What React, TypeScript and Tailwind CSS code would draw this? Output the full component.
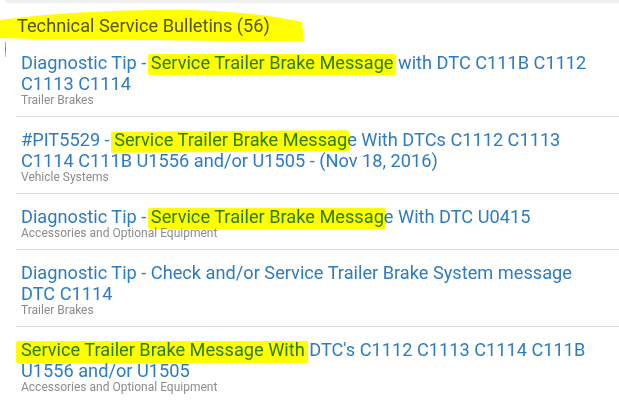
import React from "react";

type Row = { title: React.ReactNode; sub: string };

function HL({ children, className = "" }: { children: React.ReactNode; className?: string }) {
  return (
    <span className="relative">
      {children}
      <span
        className={
          "absolute left-[-3px] right-[-2px] top-[2px] bottom-[-2px] bg-[#ffff00] mix-blend-multiply rounded-[2px] pointer-events-none " +
          className
        }
      />
    </span>
  );
}

const rows: Row[] = [
  {
    title: (
      <>
        Diagnostic Tip - <HL>Service Trailer Brake Message</HL> with DTC C111B C1112 C1113 C1114
      </>
    ),
    sub: "Trailer Brakes",
  },
  {
    title: (
      <>
        #PIT5529 - <HL className="-rotate-[0.4deg] top-[1px]">Service Trailer Brake Messag</HL>e With DTCs C1112 C1113
        C1114 C111B U1556 and/or U1505 - (Nov 18, 2016)
      </>
    ),
    sub: "Vehicle Systems",
  },
  {
    title: (
      <>
        Diagnostic Tip - <HL className="left-[-1px]">Service Trailer Brake Messag</HL>e With DTC U0415
      </>
    ),
    sub: "Accessories and Optional Equipment",
  },
  {
    title: <>Diagnostic Tip - Check and/or Service Trailer Brake System message DTC C1114</>,
    sub: "Trailer Brakes",
  },
  {
    title: (
      <>
        <HL className="left-[-5px] right-[-3px] top-[1px] bottom-[-3px]">Service Trailer Brake Message With</HL> DTC's
        C1112 C1113 C1114 C111B U1556 and/or U1505
      </>
    ),
    sub: "Accessories and Optional Equipment",
  },
];

export default function App() {
  return (
    <div className="relative flex flex-col w-[619px] h-[401px] overflow-hidden bg-white font-['Roboto','Liberation_Sans',sans-serif]">
      <div className="ml-[5px] h-[3px] shrink-0 bg-[#f1f1f1]" />
      <div className="relative pl-[17px] pt-[12px] pb-[3px] text-[18.2px] leading-[22px] text-[#555555]">
        <span className="relative">Technical Service Bulletins (56)</span>
        <svg
          className="absolute left-0 top-[5px] mix-blend-multiply pointer-events-none"
          width="306"
          height="36"
          viewBox="0 0 306 36"
        >
          <path
            d="M0,12 C30,8 80,3 150,2 C215,1 265,6 302,14 L304,33 C250,34 150,32 80,31 C40,31 15,31 0,30 Z"
            fill="#ffff00"
          />
        </svg>
      </div>
      <div className="absolute left-[5px] top-[42px] w-px h-[15px] bg-gradient-to-b from-[#e8a08a] via-[#d9603f] to-[#f0c0b0]" />
      <div className="ml-[16px] flex flex-col">
        {rows.map((r, i) => (
          <div
            key={i}
            className={
              "flex flex-col pl-[5px] pr-[19px] pt-[12px] pb-[9px] " +
              (i < rows.length - 1 ? "border-b border-[#dddddd]" : "")
            }
          >
            <div className="text-[18.2px] leading-[21px] text-[#2d7cc2]">{r.title}</div>
            <div className="text-[12px] leading-[13px] text-[#8c8c8c]">{r.sub}</div>
          </div>
        ))}
      </div>
    </div>
  );
}
